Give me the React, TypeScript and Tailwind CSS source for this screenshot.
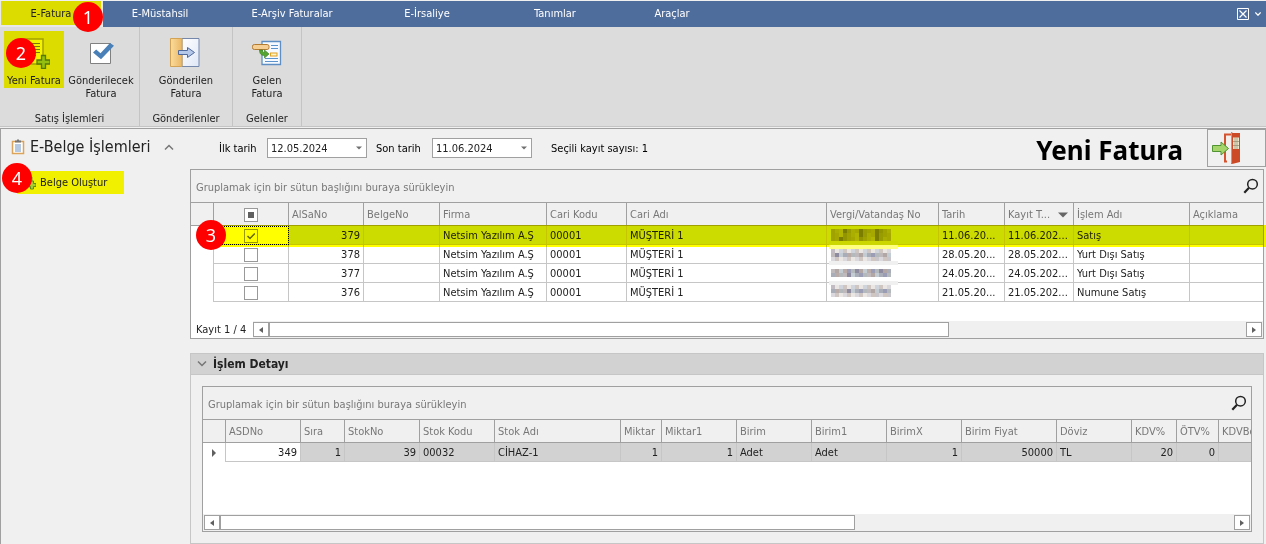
import type { ReactNode } from "react";

const tabs = [
  { label: "E-Müstahsil", width: "w-[114px]" },
  { label: "E-Arşiv Faturalar", width: "w-[150px]" },
  { label: "E-İrsaliye", width: "w-[120px]" },
  { label: "Tanımlar", width: "w-[136px]" },
  { label: "Araçlar", width: "w-[98px]" },
];

function Badge({ n, place }: { n: number; place: string }) {
  return (
    <span
      className={`absolute z-20 flex size-[30px] items-center justify-center rounded-full bg-[#fe0000] font-['Noto_Sans',sans-serif] text-[18px] leading-none text-white ${place}`}
    >
      {n}
    </span>
  );
}

function NewInvoiceIcon() {
  return (
    <svg viewBox="0 0 32 32" className="size-8" aria-hidden="true">
      <path d="M4.500 2h20.500v25H4.500z" fill="#f4f400" stroke="#a3a000" strokeWidth="1.500" />
      <path d="M9 6.500h13M9 9.500h13M9 12.500h13M9 15.500h13M9 18.500h9M9 21.500h8" stroke="#77770a" />
      <path d="M23.500 18.500h4v4.500h4.500v4h-4.500v4.500h-4v-4.500h-4.500v-4h4.500z" fill="#93bf10" stroke="#577a05" strokeWidth="1.300" />
    </svg>
  );
}

function CheckIcon() {
  return (
    <svg viewBox="0 0 32 32" className="size-8" aria-hidden="true">
      <path d="M5.500 6.500h20v20h-20z" fill="#fff" stroke="#808080" />
      <path d="M8 15.500l3.200-3 4.300 3.700L25 6l4 2.800-13 13.400z" fill="#4a80b8" />
    </svg>
  );
}

function SentIcon() {
  return (
    <svg viewBox="0 0 32 32" className="size-8" aria-hidden="true">
      <defs>
        <linearGradient id="sentFolder" x1="0" x2="1">
          <stop offset="0" stopColor="#fbdc9c" />
          <stop offset="1" stopColor="#e9b764" />
        </linearGradient>
        <linearGradient id="sentPage" x1="0" x2="1" y1="0" y2="1">
          <stop offset="0" stopColor="#fff" />
          <stop offset="1" stopColor="#dfe7f6" />
        </linearGradient>
      </defs>
      <path d="M12 1.500h17v28H12z" fill="url(#sentPage)" stroke="#7587ab" />
      <path d="M.5 1.500h11.500v28H.5z" fill="url(#sentFolder)" stroke="#d3a355" />
      <path d="M8.500 13.500h9V10.500l7 5-7 5v-3h-9z" fill="#b5c8ea" stroke="#50699c" />
    </svg>
  );
}

function IncomingIcon() {
  return (
    <svg viewBox="0 0 32 32" className="size-8" aria-hidden="true">
      <path d="M11 4.500h18.500v23H11z" fill="#f7fbff" stroke="#5f8fc2" strokeWidth="1.300" />
      <path d="M20 8.500h7M20 11.500h7M14 21.500h13M14 24.500h13" stroke="#5c93cb" />
      <rect x="1.500" y="7.500" width="16.500" height="5" rx="1.800" fill="#f5cf93" stroke="#b37b32" />
      <rect x="19.500" y="16" width="6.500" height="3" fill="#fff3c8" stroke="#e3a021" />
      <path d="M8.500 13c0 4 2 5.500 5 5.500v2.500l4.500-4-4.500-4v2.500c-1.500 0-2-.8-2-2.500z" fill="#55a630" stroke="#347a1b" strokeWidth=".6" />
    </svg>
  );
}

function DoorIcon() {
  return (
    <svg viewBox="0 0 32 32" className="size-8" aria-hidden="true">
      <path d="M14 2h7v27h-7z" fill="#f4efec" />
      <path d="M14 30V2.500h7M13 29.500h3" fill="none" stroke="#d5532f" strokeWidth="2" />
      <path d="M20 0l2 1h7v29l-7 1.800-2 .2z" fill="#cc4a26" />
      <path d="M20.500.5v31" stroke="#e58a6a" />
      <path d="M22 5.500h6V17h-6z" fill="#efe6cc" />
      <path d="M24 5.500V17M26 5.500V17M22 9.500h6M22 13.500h6" stroke="#8f8b6f" strokeWidth=".7" />
      <path d="M1.500 13.500h8.500V10l7.500 6.500-7.500 6.500v-3.500H1.500z" fill="#a4d46a" stroke="#4f9430" />
    </svg>
  );
}

function SearchButton() {
  return (
    <button type="button" aria-label="Ara" className="mr-1 flex">
      <svg viewBox="0 0 16 16" className="size-4" fill="none" stroke="#222" aria-hidden="true">
        <circle cx="9.500" cy="6.200" r="4.800" strokeWidth="1.500" />
        <path d="M6 9.700L1.300 14.700" strokeWidth="2.200" />
      </svg>
    </button>
  );
}

function RibbonGroup({ title, width, children }: { title: string; width: string; children: ReactNode }) {
  return (
    <section className={`flex flex-col justify-between border-r border-[#c4c4c4] pt-1 ${width}`}>
      <div className="flex items-start justify-center">{children}</div>
      <h2 className="text-center leading-[15px]">{title}</h2>
    </section>
  );
}

function RibbonButton({ icon, lines }: { icon: ReactNode; lines: string[] }) {
  return (
    <button type="button" className="flex w-[68px] flex-col items-center gap-[5px] pt-1.5 leading-[13px]">
      {icon}
      <span>
        {lines.map((l) => (
          <span key={l} className="block whitespace-nowrap">{l}</span>
        ))}
      </span>
    </button>
  );
}

function DateField({ id, label, value, labelWidth }: { id: string; label: string; value: string; labelWidth: string }) {
  return (
    <div className="flex items-center">
      <label htmlFor={id} className={`pt-px whitespace-nowrap ${labelWidth}`}>{label}</label>
      <div className="flex h-5 w-[100px] items-center border border-[#a0a0a0] bg-white">
        <input id={id} defaultValue={value} className="w-0 flex-1 bg-transparent pt-px pl-[3px] text-[#222] outline-none" />
        <button type="button" aria-label={`${label} seç`} className="flex w-3.5 justify-center">
          <svg viewBox="0 0 6 4" className="h-1 w-1.5" aria-hidden="true"><path d="M0 .5h6L3 3.500z" fill="#707070" /></svg>
        </button>
      </div>
    </div>
  );
}

function Check({ label, checked, mixed }: { label: string; checked?: boolean; mixed?: boolean }) {
  return (
    <span className="mx-auto grid size-3.5 place-items-center">
      <input
        type="checkbox"
        aria-label={label}
        defaultChecked={checked}
        className={`col-start-1 row-start-1 size-3.5 appearance-none border border-[#999] ${checked ? "bg-transparent" : "bg-white"}`}
      />
      {checked && (
        <svg viewBox="0 0 10 10" className="pointer-events-none col-start-1 row-start-1 size-2.5" aria-hidden="true">
          <path d="M1.500 5l2.500 2.500L8.800 2.500" fill="none" stroke="#666" strokeWidth="1.500" />
        </svg>
      )}
      {mixed && <span className="pointer-events-none col-start-1 row-start-1 size-1.5 bg-[#606060]" />}
    </span>
  );
}

function ScrollArrow({ dir }: { dir: "left" | "right" }) {
  return (
    <button
      type="button"
      aria-label={dir === "left" ? "Sola kaydır" : "Sağa kaydır"}
      className="flex h-[15px] w-4 shrink-0 items-center justify-center border border-[#a0a0a0] bg-white"
    >
      <svg viewBox="0 0 4 6" className="h-1.5 w-1" aria-hidden="true">
        <path d={dir === "left" ? "M4 0v6L0 3z" : "M0 0v6l4-3z"} fill="#606060" />
      </svg>
    </button>
  );
}

function ScrollBar({ thumb }: { thumb: string }) {
  return (
    <div className="flex h-[17px] flex-1 items-center bg-[#f0f0f0] pr-px">
      <ScrollArrow dir="left" />
      <div className="flex flex-1">
        <div className={`h-[15px] border border-[#a0a0a0] bg-white ${thumb}`} />
      </div>
      <ScrollArrow dir="right" />
    </div>
  );
}

function GroupPanel() {
  return (
    <div className="flex h-8 items-center justify-between pl-[5px] text-[#777]">
      <span className="pt-1">Gruplamak için bir sütun başlığını buraya sürükleyin</span>
      <SearchButton />
    </div>
  );
}

const th = "h-6 overflow-hidden border-y border-r border-[#a0a0a0] bg-[#f0f0f0] px-[3px] pt-px text-left font-normal whitespace-nowrap text-[#777] last:border-r-0";
const td = "h-[19px] overflow-hidden border-r border-b border-[#c6c6c6] px-[3px] pt-0.5 whitespace-nowrap last:border-r-0";

const mainCols = ["w-[23px]", "w-[75px]", "w-[75px]", "w-[76px]", "w-[107px]", "w-[80px]", "w-[200px]", "w-[112px]", "w-[66px]", "w-[69px]", "w-[116px]", ""];
const mainRows = [
  { no: "379", date: "11.06.20...", saved: "11.06.202...", kind: "Satış" },
  { no: "378", date: "28.05.20...", saved: "28.05.202...", kind: "Yurt Dışı Satış" },
  { no: "377", date: "24.05.20...", saved: "24.05.202...", kind: "Yurt Dışı Satış" },
  { no: "376", date: "21.05.20...", saved: "21.05.202...", kind: "Numune Satış" },
];

const yellowTones = ["#a6a800", "#989c00", "#b2b600", "#a0a200", "#7b7d00", "#aaae00", "#929400"];
const greyTones = ["#b9aca8", "#9a9db5", "#b4b9bc", "#bfb9bc", "#8e8aa0", "#b3a7a5", "#c2ccd2", "#a9adb8"];
const paleTones = ["#c9c6cb", "#dad7dd", "#cfc6c2", "#e9e6e4", "#d0d4dd", "#c2bcc2"];
const mosaic = [
  { y: 3, lines: [yellowTones, yellowTones, yellowTones] },
  { y: 23, lines: [paleTones, greyTones, paleTones] },
  { y: 43, lines: [greyTones, greyTones] },
  { y: 59, lines: [paleTones, greyTones, paleTones] },
];

function MaskedNumbers() {
  return (
    <svg viewBox="0 0 70 76" className="absolute top-0 left-0.5 z-10 h-[76px] w-[70px]" shapeRendering="crispEdges" aria-hidden="true">
      <rect y="15" width="69" height="4" fill="#ccd600" />
      <rect y="19" width="69" height="4" fill="#ffff80" />
      <rect y="35" width="69" height="4" fill="#f0f0f0" />
      <rect y="55" width="69" height="4" fill="#f0f0f0" />
      {mosaic.map((block) =>
        block.lines.map((tones, r) =>
          Array.from({ length: 15 }, (_, c) => (
            <rect
              key={`${block.y}-${r}-${c}`}
              x={2 + c * 4}
              y={block.y + r * 4}
              width="4"
              height="4"
              fill={tones[(c * 37 + ((c * 7 + r * 5) % 11) * 3 + r * 13 + block.y) % tones.length]}
            />
          )),
        ),
      )}
    </svg>
  );
}

function MainGrid() {
  return (
    <div className="border border-[#a0a0a0] bg-[#f0f0f0]">
      <GroupPanel />
      <div className="relative bg-white pb-[19px]">
        <table className="w-full table-fixed border-separate border-spacing-0">
          <colgroup>{mainCols.map((w, i) => <col key={i} className={w} />)}</colgroup>
          <thead>
            <tr>
              <th className={th} />
              <th className={th}><Check label="Tümünü seç" mixed /></th>
              <th className={th}>AlSaNo</th>
              <th className={th}>BelgeNo</th>
              <th className={th}>Firma</th>
              <th className={th}>Cari Kodu</th>
              <th className={th}>Cari Adı</th>
              <th className={th}>Vergi/Vatandaş No</th>
              <th className={th}>Tarih</th>
              <th className={th}>
                <span className="flex items-center justify-between pr-0.5">
                  Kayıt T...
                  <svg viewBox="0 0 10 6" className="h-1.5 w-2.5" aria-hidden="true"><path d="M0 .5h10L5 5.500z" fill="#666" /></svg>
                </span>
              </th>
              <th className={th}>İşlem Adı</th>
              <th className={th}>Açıklama</th>
            </tr>
          </thead>
          <tbody>
            {mainRows.map((r, i) => (
              <tr key={r.no} className={i === 0 ? "bg-[#cddce8]" : "bg-white"}>
                <td className="border-r border-[#c6c6c6] bg-white" />
                <td className={`${td} ${i === 0 ? "bg-white outline-1 -outline-offset-1 outline-black outline-dotted" : ""}`}>
                  <Check label={`${r.no} seç`} checked={i === 0} />
                </td>
                <td className={`${td} text-right`}>{r.no}</td>
                <td className={td} />
                <td className={td}>Netsim Yazılım A.Ş</td>
                <td className={td}>00001</td>
                <td className={td}>MÜŞTERİ 1</td>
                <td className="relative h-[19px] border-r border-b border-[#c6c6c6]">{i === 0 && <MaskedNumbers />}</td>
                <td className={td}>{r.date}</td>
                <td className={td}>{r.saved}</td>
                <td className={td}>{r.kind}</td>
                <td className={td} />
              </tr>
            ))}
          </tbody>
        </table>
        <div className="pointer-events-none absolute top-[23px] -right-[3px] left-[22px] h-[22px] bg-[#ffff00] mix-blend-multiply" />
        <Badge n={3} place="top-[18px] left-[5px]" />
      </div>
      <div className="flex items-center bg-white">
        <span className="w-[62px] pl-[5px] whitespace-nowrap">Kayıt 1 / 4</span>
        <ScrollBar thumb="w-[69.6%]" />
      </div>
    </div>
  );
}

const detailCols = [
  { name: "ASDNo", width: "w-[75px]", value: "349", right: true },
  { name: "Sıra", width: "w-[44px]", value: "1", right: true },
  { name: "StokNo", width: "w-[75px]", value: "39", right: true },
  { name: "Stok Kodu", width: "w-[75px]", value: "00032", right: false },
  { name: "Stok Adı", width: "w-[126px]", value: "CİHAZ-1", right: false },
  { name: "Miktar", width: "w-[41px]", value: "1", right: true },
  { name: "Miktar1", width: "w-[75px]", value: "1", right: true },
  { name: "Birim", width: "w-[75px]", value: "Adet", right: false },
  { name: "Birim1", width: "w-[75px]", value: "Adet", right: false },
  { name: "BirimX", width: "w-[75px]", value: "1", right: true },
  { name: "Birim Fiyat", width: "w-[95px]", value: "50000", right: true },
  { name: "Döviz", width: "w-[75px]", value: "TL", right: false },
  { name: "KDV%", width: "w-[45px]", value: "20", right: true },
  { name: "ÖTV%", width: "w-[42px]", value: "0", right: true },
  { name: "KDVBö", width: "", value: "", right: false },
];

function DetailGrid() {
  return (
    <div className="border border-[#a0a0a0] bg-[#f0f0f0]">
      <GroupPanel />
      <div className="bg-white pb-[52px]">
        <table className="w-full table-fixed border-separate border-spacing-0">
          <colgroup>
            <col className="w-[23px]" />
            {detailCols.map((c) => <col key={c.name} className={c.width} />)}
          </colgroup>
          <thead>
            <tr>
              <th className={th} />
              {detailCols.map((c) => <th key={c.name} className={th}>{c.name}</th>)}
            </tr>
          </thead>
          <tbody>
            <tr className="bg-[#d2d2d2]">
              <td className="border-r border-[#c6c6c6] bg-white">
                <svg viewBox="0 0 4 8" className="mx-auto h-2 w-1" aria-hidden="true"><path d="M0 0v8l4-4z" fill="#606060" /></svg>
              </td>
              {detailCols.map((c, i) => (
                <td key={c.name} className={`${td} ${c.right ? "text-right" : ""} ${i === 0 ? "bg-white" : ""}`}>{c.value}</td>
              ))}
            </tr>
          </tbody>
        </table>
      </div>
      <div className="flex bg-[#f0f0f0] pl-px">
        <ScrollBar thumb="w-[62.6%]" />
      </div>
    </div>
  );
}

export default function App() {
  return (
    <div className="flex min-h-screen flex-col overflow-hidden bg-[#f0f0f0] font-['DejaVu_Sans_Condensed','DejaVu_Sans',sans-serif] text-[11px] leading-[14px] text-[#222]">
      <header>
        <nav className="mt-px flex h-[26px] bg-[#4f6d9c] text-white">
          <div className="relative border-r-2 border-b-2 border-l border-[#e8e8e8]">
            <button type="button" className="h-6 w-[100px] bg-[#dcdc00] pt-0.5 text-[#222]">E-Fatura</button>
            <Badge n={1} place="top-px left-[72px]" />
          </div>
          {tabs.map((t) => (
            <button key={t.label} type="button" className={t.width}>{t.label}</button>
          ))}
          <div className="ml-auto flex items-center gap-1.5 pr-[5px]">
            <button type="button" aria-label="Kapat" className="flex">
              <svg viewBox="0 0 12 12" className="size-3" fill="none" stroke="#fff" aria-hidden="true">
                <path d="M.5.5h11v11H.5z" />
                <path d="M2.500 2.500l7 7M9.500 2.500l-7 7" strokeWidth="1.200" />
              </svg>
            </button>
            <button type="button" aria-label="Menü" className="flex">
              <svg viewBox="0 0 6 4" className="h-1 w-1.5" fill="none" stroke="#fff" aria-hidden="true"><path d="M.3.5L3 3.200 5.700.5" strokeWidth="1.300" /></svg>
            </button>
          </div>
        </nav>
        <div className="flex h-[100px] border-b border-[#c4c4c4] bg-[#dcdcdc]">
          <RibbonGroup title="Satış İşlemleri" width="w-[140px]">
            <button type="button" className="relative mr-[3px] flex h-[57px] w-[60px] flex-col items-center gap-[5px] bg-[#dcdc00] pt-1.5 leading-[13px] whitespace-nowrap">
              <NewInvoiceIcon />
              Yeni Fatura
              <Badge n={2} place="top-[7px] left-0.5" />
            </button>
            <RibbonButton icon={<CheckIcon />} lines={["Gönderilecek", "Fatura"]} />
          </RibbonGroup>
          <RibbonGroup title="Gönderilenler" width="w-[93px]">
            <RibbonButton icon={<SentIcon />} lines={["Gönderilen", "Fatura"]} />
          </RibbonGroup>
          <RibbonGroup title="Gelenler" width="w-[69px]">
            <RibbonButton icon={<IncomingIcon />} lines={["Gelen", "Fatura"]} />
          </RibbonGroup>
        </div>
      </header>

      <div className="mt-px flex flex-1 border-t border-l border-[#a0a0a0]">
        <aside className="w-[189px] shrink-0 pt-1">
          <button type="button" className="flex h-7 w-full items-center pl-2.5 text-[16px] leading-5 whitespace-nowrap">
            <svg viewBox="0 0 14 16" className="mr-[5px] h-4 w-3.5" aria-hidden="true">
              <path d="M1.500 2.500h11v12h-11z" fill="#fff" stroke="#dba45a" strokeWidth="1.500" />
              <path d="M4 3.500V1.500h2V.5h2v1h2v2z" fill="#777" />
              <path d="M4 6h6M4 8h6M4 10h6M4 12h6" stroke="#6b94c4" />
            </svg>
            E-Belge İşlemleri
            <svg viewBox="0 0 10 6" className="mr-4 ml-auto h-1.5 w-2.5" aria-hidden="true"><path d="M1 5.500l4-4 4 4" fill="none" stroke="#777" strokeWidth="1.500" /></svg>
          </button>
          <div className="relative mt-2.5">
            <a href="#belge" className="ml-4 flex h-[23px] w-[107px] items-center gap-1 bg-[#f0f000] pl-[5px] whitespace-nowrap">
              <svg viewBox="0 0 14 14" className="size-3.5 shrink-0" aria-hidden="true">
                <path d="M2 1h8v10H2z" fill="#ffff90" stroke="#90903a" />
                <path d="M8.500 5h3v2.500h2.500v3h-2.500v2.500h-3v-2.500h-2.500v-3h2.500z" fill="#a5cf2d" stroke="#5d8a1c" />
              </svg>
              Belge Oluştur
            </a>
            <Badge n={4} place="-top-2 left-px" />
          </div>
        </aside>

        <main className="flex min-w-0 flex-1 flex-col pr-0.5">
          <div className="flex h-10 items-start justify-between">
            <div className="flex items-center pt-[9px] pl-[29px] text-black">
              <DateField id="first-date" label="İlk tarih" value="12.05.2024" labelWidth="w-12" />
              <span className="w-[9px]" />
              <DateField id="last-date" label="Son tarih" value="11.06.2024" labelWidth="w-14" />
              <span className="pt-px pl-[19px] whitespace-nowrap">Seçili kayıt sayısı: 1</span>
            </div>
            <div className="-mr-0.5 flex items-center gap-6">
              <h1 className="pt-1 font-['Noto_Sans',sans-serif] text-[26px] leading-8 font-bold whitespace-nowrap text-black">Yeni Fatura</h1>
              <button type="button" aria-label="Çıkış" className="flex h-[38px] w-[59px] items-center border border-[#a0a0a0] pl-[3px]">
                <DoorIcon />
              </button>
            </div>
          </div>
          <MainGrid />
          <section className="mt-3.5 border border-[#c6c6c6]">
            <h2 className="border-b border-[#c6c6c6] bg-[#d2d2d2]">
              <button type="button" className="flex h-5 w-full items-center gap-1.5 pl-1.5 text-[12px] font-bold">
                <svg viewBox="0 0 10 6" className="h-1.5 w-2.5" aria-hidden="true"><path d="M1 .5l4 4 4-4" fill="none" stroke="#777" strokeWidth="1.500" /></svg>
                İşlem Detayı
              </button>
            </h2>
            <div className="p-[11px]">
              <DetailGrid />
            </div>
          </section>
        </main>
      </div>
    </div>
  );
}
